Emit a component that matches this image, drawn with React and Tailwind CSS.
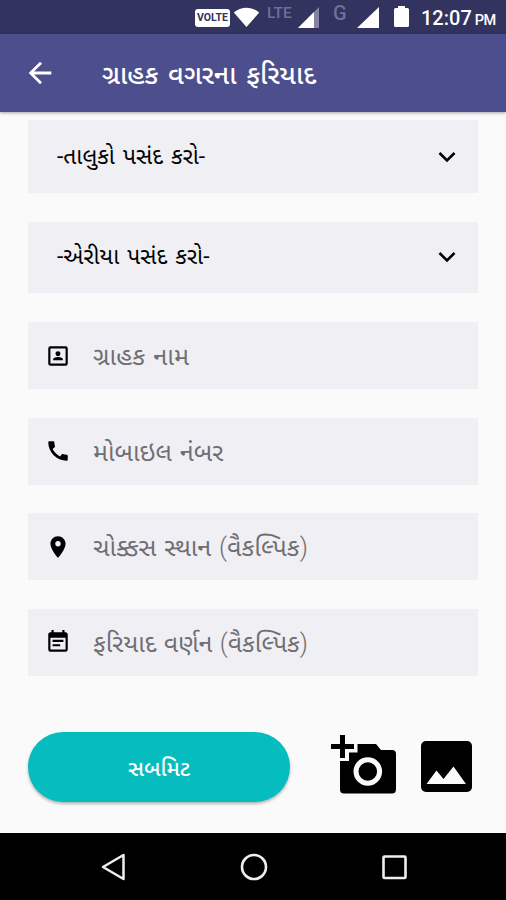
import { MdArrowBack, MdCall, MdEventNote, MdLocationOn } from 'react-icons/md';

const ContactBox = ({ className }) => (
  <svg className={className} viewBox="0 0 24 24" fill="currentColor">
    <rect x="4" y="4" width="16" height="16" rx="1" fill="none" stroke="currentColor" strokeWidth="2" />
    <circle cx="12" cy="10" r="2.300" />
    <path d="M7.500 16V15.200C7.500 13.700 10.300 13 12 13S16.500 13.700 16.500 15.200V16Z" />
  </svg>
);

const selects = [
  { label: '-તાલુકો પસંદ કરો-', size: 'h-[73px]' },
  { label: '-એરીયા પસંદ કરો-', size: 'h-[71px] pb-[2px]' },
];

const inputs = [
  { label: 'ગ્રાહક નામ', icon: ContactBox, text: 'text-[25.3px] [word-spacing:2px]' },
  { label: 'મોબાઇલ નંબર', icon: MdCall, text: 'text-[25.1px] [word-spacing:2px]' },
  { label: 'ચોક્કસ સ્થાન', note: 'વૈકલ્પિક', icon: MdLocationOn, text: 'text-[25.1px] [word-spacing:1.5px]' },
  { label: 'ફરિયાદ વર્ણન', note: 'વૈકલ્પિક', icon: MdEventNote, text: 'text-[24.9px] [word-spacing:1.3px]' },
];

const StatusBar = () => (
  <div className="flex h-[34px] shrink-0 items-start bg-[#32335e] pl-[195px] text-white">
    <div className="mt-[9px] flex h-[18px] w-[35px] shrink-0 items-center justify-center rounded-[3px] bg-white text-[10.5px] leading-none font-bold text-[#32335e]">
      VOLTE
    </div>
    <svg className="mt-[7px] ml-[3px] h-[20px] w-[27px] shrink-0" viewBox="0 0 27 20" fill="currentColor">
      <path d="M.8 5.5C8-1 19-1 26.2 5.5L13.5 20Z" />
    </svg>
    <span className="mt-[5px] ml-[7px] w-[26px] shrink-0 text-[15.5px] leading-[16px] font-medium text-[#6f709a]">LTE</span>
    <svg className="mt-[7px] ml-[5px] h-[21px] w-[22px] shrink-0" viewBox="0 0 22 21">
      <path d="M21 0V21H0Z" fill="#8283a5" />
      <path d="M16 5V21H0Z" fill="white" />
    </svg>
    <span className="mt-[3px] ml-[13px] w-[14px] shrink-0 text-[20px] leading-[20px] font-medium text-[#6f709a]">G</span>
    <svg className="mt-[7px] ml-[10px] h-[21px] w-[22px] shrink-0" viewBox="0 0 22 21" fill="currentColor">
      <path d="M22 0V21H0Z" />
    </svg>
    <svg className="mt-[6px] ml-[15px] h-[21px] w-[15px] shrink-0" viewBox="0 0 15 21" fill="currentColor">
      <path d="M4 0H11V2H13.5Q15 2 15 3.500V19.500Q15 21 13.500 21H1.500Q0 21 0 19.500V3.500Q0 2 1.500 2H4Z" />
    </svg>
    <div className="mt-[7px] ml-[12px] flex items-baseline gap-[3px] leading-[22px] font-medium whitespace-nowrap">
      <span className="text-[20px]">12:07</span>
      <span className="text-[14.500px] tracking-[-0.5px]">PM</span>
    </div>
  </div>
);

const Header = () => (
  <header className="z-10 flex h-[78px] shrink-0 items-center bg-[#4c4e8d] pl-[23px] text-white shadow-[0_1px_3px_rgba(0,0,0,0.35)]">
    <MdArrowBack className="size-[34px] shrink-0" />
    <h1 className="ml-[45px] pt-[4px] text-[26.800px] leading-[34px] font-medium [word-spacing:3px] whitespace-nowrap">
      ગ્રાહક વગરના ફરિયાદ
    </h1>
  </header>
);

const SelectField = ({ label, size }) => (
  <div className={`flex shrink-0 items-center justify-between bg-[#f0eff4] pr-[22px] pl-[29px] text-black ${size}`}>
    <span className="text-[22.800px] leading-[30px] [word-spacing:2.5px] whitespace-nowrap">{label}</span>
    <svg className="h-[12px] w-[18px]" viewBox="0 0 18 12" fill="none" stroke="currentColor" strokeWidth="2.6">
      <path d="M1.500 2L9 9.500L16.500 2" />
    </svg>
  </div>
);

const InputField = ({ label, note, icon: Icon, text }) => (
  <div className="flex h-[67px] shrink-0 items-center bg-[#f0eff4] pl-[17px]">
    <Icon className="size-[26px] shrink-0 text-black" />
    <span className={`ml-[22px] pt-[3px] leading-[34px] whitespace-nowrap text-[#6f6e73] ${text}`}>
      {label}
      {note && (
        <>
          {' '}
          <span className="font-light">(</span>
          {note}
          <span className="font-light">)</span>
        </>
      )}
    </span>
  </div>
);

const CameraPlus = () => (
  <svg className="h-[60px] w-[66px]" viewBox="0 0 66 60" fill="black">
    <path d="M26.500 9H45L50 15H61Q65 15 65 19V54Q65 58.500 61 58.500H13Q9 58.500 9 54.500V26H18V17.500H26.500Z" />
    <path d="M9 0H14V9H23V14H14V23H9V14H0V9H9Z" />
    <circle cx="36.800" cy="36.500" r="11.800" fill="none" stroke="#fafafa" strokeWidth="5" />
  </svg>
);

const Picture = () => (
  <svg className="h-[51px] w-[51px]" viewBox="0 0 51 51">
    <rect width="51" height="51" rx="5" fill="black" />
    <path d="M5.500 43L15.500 29.500L22.500 38L32.500 25.500L45 43Z" fill="#fafafa" />
  </svg>
);

const NavBar = () => (
  <nav className="flex h-[67px] shrink-0 items-center bg-black pl-[101px] text-[#eeeeee]">
    <svg className="size-[28px]" viewBox="0 0 28 28" fill="none" stroke="currentColor" strokeWidth="2.500" strokeLinejoin="round">
      <path d="M22.500 2V26L2 14Z" />
    </svg>
    <svg className="ml-[110.500px] size-[28px]" viewBox="0 0 28 28" fill="none" stroke="currentColor" strokeWidth="2.600">
      <circle cx="14" cy="14" r="12" />
    </svg>
    <svg className="ml-[112px] size-[28px]" viewBox="0 0 28 28" fill="none" stroke="currentColor" strokeWidth="2.600">
      <rect x="3.500" y="3.500" width="22" height="21.500" rx="1" />
    </svg>
  </nav>
);

export default function App() {
  return (
    <div className="flex h-[900px] w-[506px] flex-col overflow-hidden bg-[#fafafa] font-[Roboto,'Noto_Sans_Gujarati','Noto_Sans',sans-serif]">
      <StatusBar />
      <Header />
      <main className="flex flex-1 flex-col px-[28px] pt-[8px]">
        <div className="flex flex-col gap-[29px]">
          {selects.map((field) => (
            <SelectField key={field.label} {...field} />
          ))}
        </div>
        <div className="mt-[29px] flex flex-col gap-[28.500px]">
          {inputs.map((field) => (
            <InputField key={field.label} {...field} />
          ))}
        </div>
        <div className="mt-[56px] flex items-center">
          <button className="h-[70px] w-[262px] rounded-full bg-[#05bdbe] pt-[4px] text-[22px] font-medium text-white shadow-[0_2px_3px_rgba(0,0,0,0.28)]">
            સબમિટ
          </button>
          <div className="ml-[41px] pb-[3px]">
            <CameraPlus />
          </div>
          <div className="ml-[24px]">
            <Picture />
          </div>
        </div>
      </main>
      <NavBar />
    </div>
  );
}
